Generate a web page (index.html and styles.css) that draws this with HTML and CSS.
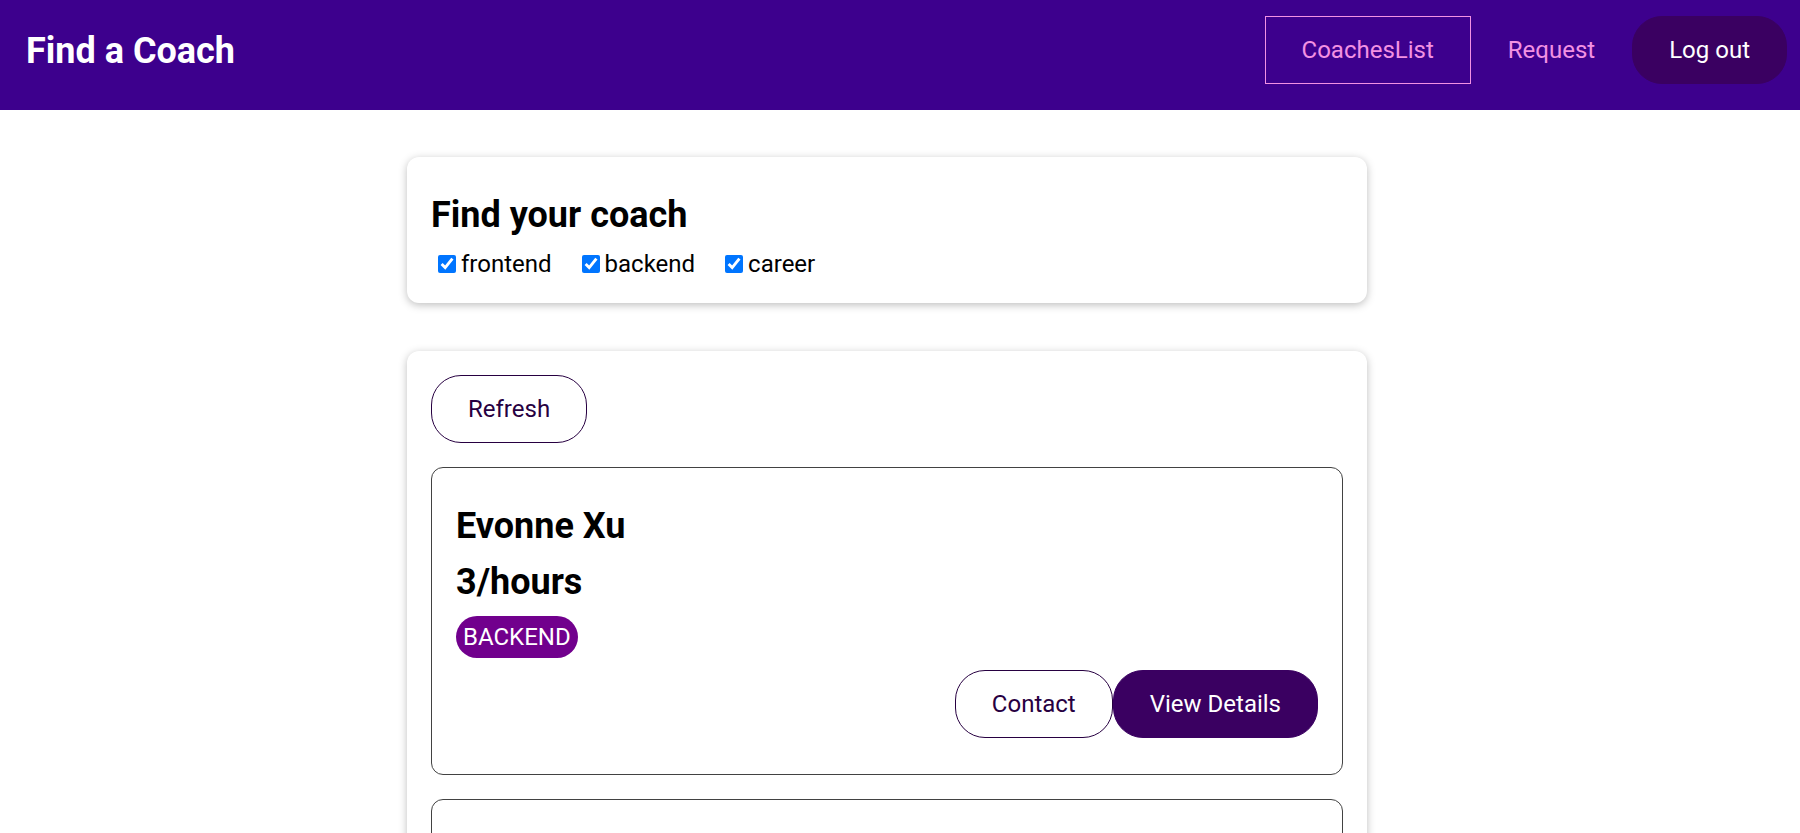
FILE: index.html
```html
<!DOCTYPE html>
<html lang="en">
<head>
<meta charset="utf-8">
<title>Find a Coach</title>
<link rel="stylesheet" href="styles.css">
</head>
<body>
<header class="topbar">
  <h1 class="brand"><a href="#" class="brand-link">Find a Coach</a></h1>
  <nav class="nav">
    <ul class="nav-list">
      <li class="nav-item"><a href="#" class="nav-link active">CoachesList</a></li>
      <li class="nav-item"><a href="#" class="nav-link">Request</a></li>
      <li class="nav-item"><button class="btn">Log out</button></li>
    </ul>
  </nav>
</header>
<main class="content">
  <section class="card">
    <h2 class="filter-title">Find your coach</h2>
    <div class="filter-options">
      <span class="filter-option"><input type="checkbox" id="frontend" checked><label for="frontend">frontend</label></span>
      <span class="filter-option"><input type="checkbox" id="backend" checked><label for="backend">backend</label></span>
      <span class="filter-option"><input type="checkbox" id="career" checked><label for="career">career</label></span>
    </div>
  </section>
  <section class="card">
    <div class="controls">
      <button class="btn btn-outline">Refresh</button>
    </div>
    <ul class="coach-list">
      <li class="coach-item">
        <h3 class="coach-name">Evonne Xu</h3>
        <h4 class="coach-rate">3/hours</h4>
        <div class="badges"><span class="badge backend">BACKEND</span></div>
        <div class="actions">
          <button class="btn btn-outline">Contact</button>
          <button class="btn">View Details</button>
        </div>
      </li>
      <li class="coach-item">
        <h3 class="coach-name">Julie Jones</h3>
        <h4 class="coach-rate">30/hours</h4>
        <div class="badges"><span class="badge frontend">FRONTEND</span><span class="badge career">CAREER</span></div>
        <div class="actions">
          <button class="btn btn-outline">Contact</button>
          <button class="btn">View Details</button>
        </div>
      </li>
    </ul>
  </section>
</main>
</body>
</html>
```

FILE: styles.css
```css
* {
  box-sizing: border-box;
}

html {
  font-family: Roboto, "Liberation Sans", sans-serif;
  font-size: 24px;
  line-height: 1.2;
}

body {
  margin: 0;
  color: #000;
}

.topbar {
  height: 110px;
  background-color: #3d008d;
  display: flex;
  justify-content: space-between;
  align-items: flex-start;
  padding: 16px 13px 0 26px;
}

.brand {
  margin: 0;
  font-size: 36px;
  line-height: 70px;
}

.brand-link {
  color: #fff;
  text-decoration: none;
}

.nav-list {
  list-style: none;
  margin: 0;
  padding: 0;
  display: flex;
  align-items: center;
}

.nav-item {
  margin: 0;
}

.nav-link {
  display: inline-block;
  text-decoration: none;
  color: #f391e3;
  padding: 18px 36px;
  line-height: 30px;
  border: 1px solid transparent;
}

.nav-link.active {
  border-color: #f391e3;
}

.btn {
  font: inherit;
  line-height: 30px;
  display: inline-block;
  padding: 18px 36px;
  background-color: #3a0061;
  border: 1px solid #3a0061;
  color: #fff;
  border-radius: 30px;
  cursor: pointer;
  margin: 0;
}

.btn-outline {
  background-color: transparent;
  border-color: #270041;
  color: #270041;
}

.content {
  padding-right: 26px;
  padding-top: 1px;
}

.card {
  max-width: 960px;
  margin: 46px auto 48px;
  padding: 24px;
  border-radius: 12px;
  background: #fff;
  box-shadow: 0 2px 8px rgba(0, 0, 0, 0.26);
}

.filter-title {
  font-size: 36px;
  line-height: 44px;
  margin: 12px 0;
}

.filter-options {
  display: flex;
  align-items: center;
  line-height: 30px;
}

.filter-option {
  display: inline-flex;
  align-items: center;
  margin-right: 23px;
}

.filter-option input {
  width: 18px;
  height: 18px;
  margin: 0 5px 0 7px;
}

.coach-list {
  list-style: none;
  margin: 0;
  padding: 0;
}

.coach-item {
  margin: 24px 0;
  border: 1px solid #424242;
  border-radius: 12px;
  padding: 24px;
}

.coach-name,
.coach-rate {
  font-size: 36px;
  line-height: 44px;
  margin: 12px 0;
}

.badges {
  margin: 12px 0;
}

.badge {
  display: inline-block;
  padding: 6px 7px;
  line-height: 30px;
  border-radius: 30px;
  margin-right: 12px;
  background-color: #ccc;
  color: #252525;
}

.badge.frontend {
  background-color: #3d008d;
  color: #fff;
}

.badge.backend {
  background-color: #71008d;
  color: #fff;
}

.badge.career {
  background-color: #8d006e;
  color: #fff;
}

.actions {
  display: flex;
  justify-content: flex-end;
  margin: 12px 0;
}
```
